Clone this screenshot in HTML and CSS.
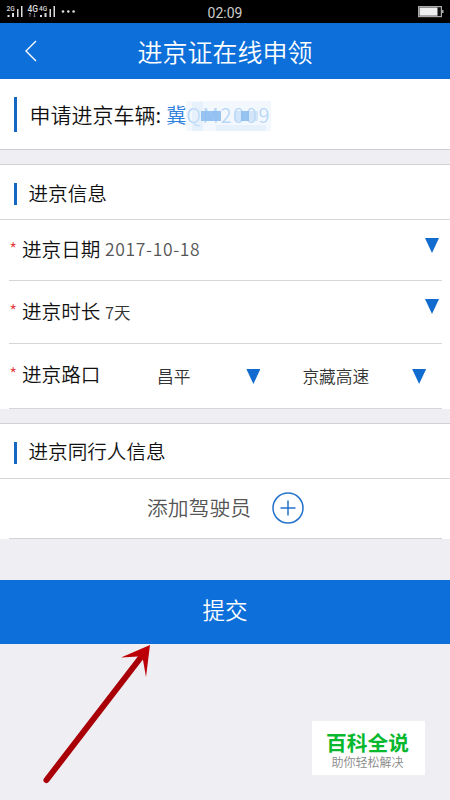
FILE: index.html
```html
<!DOCTYPE html>
<html lang="zh-CN">
<head>
<meta charset="utf-8">
<title>进京证在线申领</title>
<link rel="stylesheet" href="styles.css">
</head>
<body>
<div class="status">
  <svg class="signals" width="72" height="17" viewBox="0 0 72 17">
    <g fill="#ddd">
      <path d="M1.500 11h2v2h-2zM6 9h2v4H6zM11 5h1.500v8H11zM15 2h1.500v11H15zM34 11h2v2h-2zM38.500 9h2v4h-2zM43.500 5H45v8h-1.500zM47.500 2H49v11h-1.500z"/>
      <circle cx="57" cy="7.500" r="1.300"/><circle cx="62.300" cy="7.500" r="1.300"/><circle cx="67.600" cy="7.500" r="1.300"/>
      <text x=".5" y="6.500" font-size="6.500">2G</text>
      <text x="21.500" y="7.700" font-size="8.500">4G</text>
      <text x="33" y="6.500" font-size="6.500">4G</text>
    </g>
    <path d="M24 9v4M22.800 10.300L24 9l1.200 1.300M28.500 9v4M27.300 11.700l1.200 1.300 1.200-1.300" fill="none" stroke="#999" stroke-width=".7"/>
  </svg>
  <span class="clock">02:09</span>
  <svg class="battery" width="26" height="12" viewBox="0 0 26 12">
    <rect x=".6" y=".6" width="22.800" height="10" fill="#111" stroke="#aaa" stroke-width="1.200"/>
    <path d="M1.500 1.500h18v8.200h-18z" fill="#eee"/><path d="M24 4h1.500v3H24z" fill="#aaa"/>
  </svg>
</div>
<header class="header">
  <svg class="back" width="12" height="22" viewBox="0 0 12 22"><path d="M11 1L1 11l10 10" fill="none" stroke="#fff" stroke-width="1.400"/></svg>
  <h1>进京证在线申领</h1>
</header>
<section class="vehicle">
  <i class="bar tall"></i><span class="vehicle-label">申请进京车辆:</span>
  <span class="plate">冀<span class="masked">QM2009<svg class="mosaic" width="85" height="30" viewBox="8 0 85 30">
    <path d="M8 0h85v30H8z" fill="#e6f1fc" opacity=".5"/>
    <path d="M14 1h11v29H14zM38 24h50v6H38z" fill="#d6e7f8" opacity=".4"/>
    <path d="M23 10h20v10H23zM63 10h8v10h-8z" fill="#8dbcf0" opacity=".9"/>
    <path d="M56 10h7v10h-7zM71 10h9v10h-9z" fill="#bedaf7" opacity=".6"/>
  </svg></span></span>
</section>
<section class="card info">
  <h2><i class="bar"></i>进京信息</h2>
  <div class="row date"><b>*</b><label>进京日期</label><span class="date-value">2017-10-18</span><i class="arrow"></i></div>
  <div class="row time"><b>*</b><label>进京时长</label><span class="time-value">7天</span><i class="arrow"></i></div>
  <div class="row road"><b>*</b><label>进京路口</label>
    <div class="select place"><span>昌平</span><i class="arrow"></i></div>
    <div class="select way"><span>京藏高速</span><i class="arrow"></i></div>
  </div>
</section>
<section class="card people">
  <h2><i class="bar"></i>进京同行人信息</h2>
  <div class="add"><span>添加驾驶员</span>
    <svg width="32" height="32" viewBox="0 0 32 32"><g fill="none" stroke="#2471c9" stroke-width="1.500"><circle cx="16" cy="16" r="15"/><path d="M8.500 16h15M16 8.500v15"/></g></svg>
  </div>
</section>
<button class="submit">提交</button>
<svg class="pointer" width="112" height="144" viewBox="0 0 112 144">
  <path d="M6.500 139L100 17.500" stroke="#a90007" stroke-width="6" stroke-linecap="round"/>
  <path d="M110 4L81 16.500 98 15.500 103 19 106 36z" fill="#bd0007"/>
</svg>
<div class="watermark"><strong>百科全说</strong><span>助你轻松解决</span></div>
</body>
</html>
```
FILE: styles.css
```css
* { box-sizing: border-box; }
body {
  position: relative;
  margin: 0;
  height: 800px;
  overflow: hidden;
  background: #eeeef3;
  color: #111;
  font-family: "Noto Sans CJK SC", sans-serif;
  font-weight: 350;
}
h1, h2 { margin: 0; font-weight: 350; }
.status {
  display: grid;
  grid-template-columns: 1fr auto 1fr;
  height: 23px;
  padding: 0 6px;
  background: #000;
  color: #ccc;
}
.signals { margin-top: 4px; font-family: Roboto, sans-serif; font-weight: 500; }
.clock { font: 400 14px/26px Roboto, sans-serif; }
.battery { justify-self: end; margin-top: 6px; }
.header {
  position: relative;
  height: 56px;
  background: #0d6fda;
  color: #fff;
  text-align: center;
}
.header h1 { font-size: 25px; line-height: 57px; }
.back { position: absolute; left: 25px; top: 17px; }
.vehicle {
  display: flex;
  align-items: center;
  height: 71px;
  padding-left: 14px;
  background: #fff;
  border-bottom: 1px solid #cecfd3;
}
.bar { display: block; flex: none; width: 2.500px; height: 22px; background: #1567c1; }
.bar.tall { height: 35px; }
.vehicle-label { margin-left: 13px; font-size: 21px; }
.plate { margin-left: 5px; color: #2d80dc; font-size: 20px; white-space: nowrap; }
.masked { position: relative; color: #8dbdf2; letter-spacing: 1.700px; }
.mosaic { position: absolute; left: 0; top: 1px; }
.card { background: #fff; border-top: 1px solid #d2d2d6; }
.info { height: 245px; margin-top: 14px; }
.card h2 {
  display: flex;
  align-items: center;
  height: 55px;
  padding-left: 14px;
  border-bottom: 1px solid #d6d6da;
  font-size: 19.600px;
  line-height: 55px;
}
.card h2 .bar { margin: 4px 12px 0 0; }
.row {
  display: flex;
  margin: 0 8px 0 9px;
  border-bottom: 1px solid #d6d6da;
}
.row b { width: 13px; color: #df3939; font-size: 19px; font-weight: 300; }
.row label { width: 79px; font-size: 19.600px; }
.date { height: 61px; line-height: 58px; }
.time { height: 63px; line-height: 60px; }
.road { height: 65px; line-height: 60px; }
.arrow {
  flex: none;
  width: 14px;
  height: 15px;
  background: #126bce;
  clip-path: polygon(0 0, 100% 0, 50% 100%);
}
.row > .arrow { margin: 18px 3px 0 auto; }
.date-value { margin-left: 4px; color: #555; font-size: 17.500px; letter-spacing: .65px; }
.time-value { margin-left: 4px; color: #333; font-size: 16.500px; line-height: 63px; }
.select { display: flex; flex: none; height: 64px; color: #333; font-size: 16.700px; line-height: 65px; white-space: nowrap; }
.select .arrow { margin-top: 25px; }
.place { padding-left: 56px; }
.place .arrow { margin-left: 56px; }
.way { padding-left: 42px; }
.way .arrow { margin-left: 43px; }
.people { height: 116px; margin-top: 14px; }
.people h2 { line-height: 56px; }
.add {
  display: flex;
  align-items: center;
  height: 60px;
  margin: 0 8px 0 9px;
  padding-left: 138px;
  border-bottom: 1px solid #d2d2d6;
  color: #555;
  font-size: 20.800px;
}
.add span { margin-top: -4px; }
.add svg { margin: -1px 0 0 21px; }
.submit {
  display: block;
  width: 100%;
  height: 64px;
  margin-top: 41px;
  padding: 0 0 6px;
  border: 0;
  background: #0d6fda;
  color: #fff;
  font: inherit;
  font-size: 22.500px;
}
.pointer { position: absolute; left: 40px; top: 641px; }
.watermark {
  position: absolute;
  left: 312px;
  top: 721px;
  width: 113px;
  height: 54px;
  background: #fff;
  text-align: center;
}
.watermark strong { display: block; margin: 10px 2px 0 0; color: #08b82e; font-size: 20.700px; font-weight: 700; line-height: 22px; }
.watermark span { display: block; margin-right: 2px; color: #888; font-size: 12px; line-height: 18px; }
```
